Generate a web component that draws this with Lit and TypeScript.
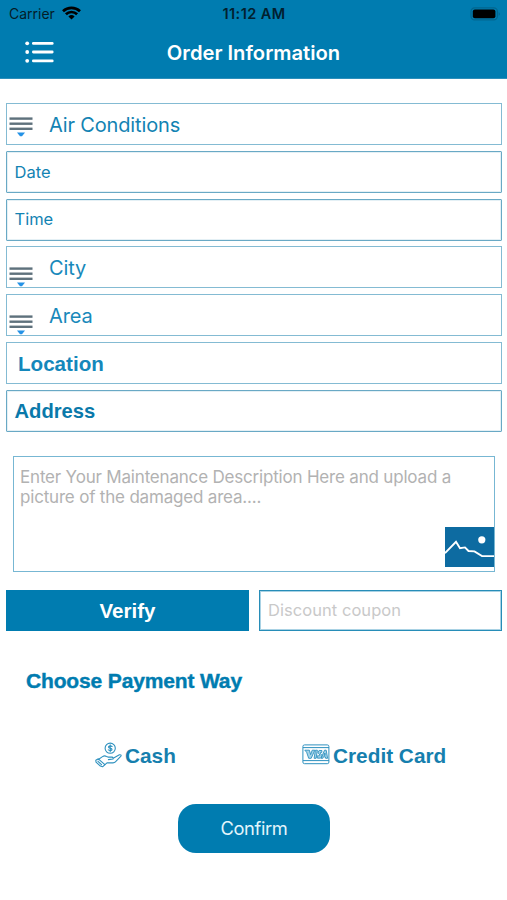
import { LitElement, html, css, svg } from "lit";
import { customElement } from "lit/decorators.js";

interface Row {
  label: string;
  kind: string;
  picker?: boolean;
}

const ROWS: Row[] = [
  { label: "Air Conditions", kind: "air", picker: true },
  { label: "Date", kind: "field date" },
  { label: "Time", kind: "field time" },
  { label: "City", kind: "city", picker: true },
  { label: "Area", kind: "area", picker: true },
  { label: "Location", kind: "location" },
  { label: "Address", kind: "field address" },
];

const wifiIcon = html`<svg class="wifi" width="19" height="14" viewBox="0 0 19 14">
  <g fill="none" stroke="#000" stroke-width="2.7">
    <path d="M1 5.2A12.4 12.4 0 0 1 18 5.2" />
    <path d="M3.9 8.3A8 8 0 0 1 15.1 8.3" />
  </g>
  <path d="M9.5 13.6L6.4 10.4A4.6 4.6 0 0 1 12.6 10.4Z" />
</svg>`;

const batteryIcon = html`<svg width="31" height="14" viewBox="0 0 31 14">
  <rect x="1" y="0.9" width="26.4" height="12" rx="3.6" fill="none" stroke="#02668f" stroke-width="1.2" />
  <rect x="2.8" y="2.5" width="22.6" height="8.7" rx="2" />
  <path d="M28.8 4.8q1.6 2.1 0 4.2z" fill="#02577e" />
</svg>`;

const menuIcon = html`<svg width="30" height="24" viewBox="0 0 30 24">
  ${[3.3, 12, 20.8].map(
    (y) => svg`<circle cx="2.2" cy=${y} r="1.9" fill="#fff" />
      <rect x="7" y=${y - 1.4} width="21.6" height="2.8" rx="1.3" fill="#fff" />`
  )}
</svg>`;

const pickerIcon = html`<svg class="picker" width="24" height="21" viewBox="0 0 24 21">
  ${[1.4, 6.5, 11.6].map((y) => svg`<rect x="0.5" y=${y} width="23" height="2.4" fill="#5e717c" />`)}
  <path d="M8 16.6h8L13 20.3h-2z" fill="#2492e6" />
</svg>`;

const pictureIcon = html`<svg class="picture" width="49" height="40" viewBox="0 0 49 40">
  <rect width="49" height="40" fill="#0d6ba1" />
  <circle cx="36.8" cy="12.8" r="3.6" fill="#fff" />
  <path d="M0 26.2L11 14.8L15 21.2L20 20.4L23.5 24L29.5 24.4L37 29.1H49" fill="none" stroke="#fff" stroke-width="1.9" />
</svg>`;

const cashIcon = html`<svg class="cash" width="27" height="26" viewBox="0 0 27 26" fill="none" stroke="#2e91bf" stroke-width="1.1" stroke-linejoin="round" stroke-linecap="round">
  <circle cx="15.2" cy="6.2" r="5.1" />
  <path d="M17.1 4.5Q15.2 3.2 13.7 4.5Q13.1 6 15.2 6.2Q17.5 6.6 16.8 8Q15.2 9.2 13.3 7.9M15.2 2.9V9.7" />
  <path d="M3 17.7L7.5 14.6Q9.5 13.3 11.5 14.4L13 15.1H17Q18.5 15.5 18 17L13.4 17.6M18.2 16.2L24.4 12.8Q27 12.4 25.7 14.4L20.4 19.9Q19.5 20.8 18 20.9H12L9.7 22.8" />
  <path d="M0.8 18.3L3.3 16.8L9.9 22.7L7.6 24.8L5.4 24.1L1 20.1ZM3 19.4L6.5 22.6" />
</svg>`;

const cardIcon = html`<svg class="card" width="28" height="21" viewBox="0 0 28 21" fill="none" stroke="#2e91bf" stroke-width="1">
  <rect x="0.9" y="0.9" width="26" height="18.8" rx="1.6" />
  <path d="M1 3.6H27M1 16.6H27" />
  <path d="M2.8 6.2H7.4L8.6 10.6L10.2 6.2H12.8L9.2 14.3H6.7L4.6 8.2ZM13.4 6.2H15.4L14.1 14.3H12.1ZM20 6.6Q16.4 5.5 16 8.1Q15.9 9.6 18 10.9Q18.5 12.2 15.4 11.8L15 13.9Q19.6 15.1 20 11.7Q19.8 10.4 18 9.2Q18 8 19.7 8.6ZM22.5 6.2H24.2L25.6 14.3H23.6L23.3 12.8H21.4L20.8 14.3H19.1ZM22.9 9L22 11.3H23.1Z" stroke-width="0.9" fill="#a5d3e8" />
</svg>`;

@customElement("app-root")
export class AppRoot extends LitElement {
  static styles = css`
    :host {
      display: flex;
      flex-direction: column;
      height: 900px;
      overflow: hidden;
      background: #fff;
      color: #007cb0;
      font-family: Inter, "Liberation Sans", sans-serif;
      white-space: nowrap;
    }
    * {
      box-sizing: border-box;
    }
    svg {
      display: block;
      flex: none;
    }
    header {
      height: 79px;
      background: #007cb0;
      flex: none;
      border-bottom: 1px solid #2c8fbb;
    }
    .status {
      height: 27px;
      display: grid;
      grid-template-columns: 1fr auto 1fr;
      align-items: center;
      padding: 0 6px 0 9px;
      color: #041c28;
      font-size: 14px;
    }
    .carrier {
      display: flex;
      align-items: center;
      gap: 7px;
    }
    .wifi {
      margin-top: -2px;
    }
    .clock {
      font-size: 14.5px;
      font-weight: 600;
      letter-spacing: 0.42px;
      color: #02202f;
      padding-right: 2px;
    }
    .battery {
      justify-self: end;
    }
    .nav {
      height: 50px;
      display: grid;
      grid-template-columns: 1fr auto 1fr;
      align-items: center;
      padding: 0 25px;
      color: #fff;
    }
    .title {
      font-size: 20.2px;
      font-weight: 600;
      padding-top: 1px;
    }
    .rows {
      display: flex;
      flex-direction: column;
      gap: 5.8px;
      padding: 24px 5px 0 6px;
    }
    .row {
      height: 42px;
      border: 1px solid #84bbd3;
      display: flex;
      align-items: center;
      font-size: 20px;
      color: #1383b3;
    }
    .air span,
    .city span,
    .area span {
      padding-top: 2px;
      letter-spacing: -0.15px;
    }
    .picker {
      margin: 5px 16px 0 2px;
    }
    .field {
      border-color: #69a9c5;
      border-radius: 1px;
      padding-left: 7.5px;
      box-shadow: inset 0 0 0 1px #e4f0f5;
    }
    .date,
    .time {
      font-size: 16.5px;
    }
    .time {
      padding-bottom: 1.5px;
    }
    .location,
    .address {
      font-family: "Liberation Sans", Arial, sans-serif;
      font-weight: 700;
      font-size: 20.2px;
    }
    .location {
      padding: 2px 0 0 11px;
      font-size: 20.6px;
      color: #1487bb;
    }
    .address {
      padding-top: 2px;
      color: #0a79aa;
    }
    .city,
    .area {
      color: #1889bb;
    }
    .city .picker,
    .area .picker {
      margin-top: 18px;
    }
    .note {
      position: relative;
      margin: 24px 12px 0 13px;
      height: 116px;
      border: 1px solid #77b7d3;
      padding: 10px 0 0 6px;
      font-size: 17px;
      line-height: 20.5px;
      letter-spacing: -0.19px;
      color: #b2b2b2;
    }
    .picture {
      position: absolute;
      right: 0;
      bottom: 4px;
    }
    .pair {
      display: grid;
      grid-template-columns: 1fr 1fr;
      gap: 10px;
      padding: 18px 5px 0 6px;
      height: 59px;
    }
    .verify {
      background: #007cb0;
      color: #fff;
      font: 700 20.5px "Liberation Sans", Arial, sans-serif;
      display: flex;
      align-items: center;
      justify-content: center;
      padding-top: 2px;
    }
    .coupon {
      border: 1px solid #278db8;
      box-shadow: inset 0 0 0 1px #a9d2e4;
      color: #c9c9c9;
      font-size: 16.5px;
      letter-spacing: 0.05px;
      display: flex;
      align-items: center;
      padding-left: 8px;
    }
    .heading {
      margin: 37px 0 0 26px;
      font: 700 21px/26px "Liberation Sans", Arial, sans-serif;
      height: 26px;
      letter-spacing: -0.15px;
      -webkit-text-stroke: 0.4px #007cb0;
    }
    .ways {
      display: grid;
      grid-template-columns: 207px 1fr;
      margin: 47px 0 0 95px;
      height: 28px;
      font: 700 20.8px "Liberation Sans", Arial, sans-serif;
      color: #167fae;
    }
    .way {
      display: flex;
      align-items: center;
      gap: 3px;
    }
    .way span {
      padding-top: 3px;
    }
    .confirm {
      margin: 35px 0 0 178px;
      width: 152px;
      height: 49px;
      border-radius: 18px;
      background: #007cb0;
      color: #e2f5fc;
      font-size: 18.3px;
      letter-spacing: -0.35px;
      display: flex;
      align-items: center;
      justify-content: center;
    }
  `;

  render() {
    return html`
      <header>
        <div class="status">
          <div class="carrier"><span>Carrier</span>${wifiIcon}</div>
          <div class="clock">11:12 AM</div>
          <div class="battery">${batteryIcon}</div>
        </div>
        <div class="nav">${menuIcon}<div class="title">Order Information</div></div>
      </header>
      <div class="rows">
        ${ROWS.map(
          (r) => html`<div class="row ${r.kind}">${r.picker ? pickerIcon : ""}<span>${r.label}</span></div>`
        )}
      </div>
      <div class="note">
        <div class="line1">Enter Your Maintenance Description Here and upload a</div>
        <div class="line2">picture of the damaged area....</div>
        ${pictureIcon}
      </div>
      <div class="pair">
        <div class="verify"><span>Verify</span></div>
        <div class="coupon"><span>Discount coupon</span></div>
      </div>
      <div class="heading">Choose Payment Way</div>
      <div class="ways">
        <div class="way">${cashIcon}<span>Cash</span></div>
        <div class="way">${cardIcon}<span>Credit Card</span></div>
      </div>
      <div class="confirm"><span>Confirm</span></div>
    `;
  }
}
